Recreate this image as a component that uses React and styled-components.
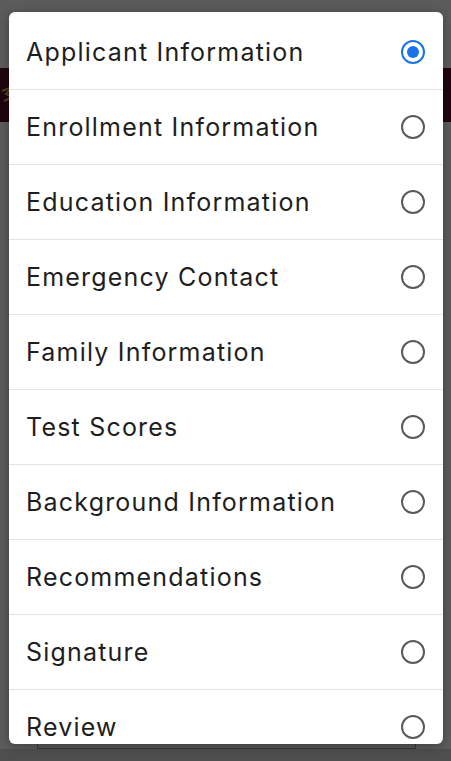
import React, { useState } from "react";
import styled, { createGlobalStyle } from "styled-components";

const GlobalStyle = createGlobalStyle`
  html, body {
    margin: 0;
    padding: 0;
    background: #e4e4e4;
    font-family: Inter, Roboto, "Liberation Sans", sans-serif;
  }
`;

const Screen = styled.div`
  position: relative;
  height: 761px;
  display: flex;
  flex-direction: column;
  overflow: hidden;
`;

const Banner = styled.div`
  margin-top: 68px;
  height: 54px;
  background: #4d0d2a;
  display: flex;
  align-items: center;
  padding-left: 2px;
`;

const Filler = styled.div`
  flex: 1;
`;

const Field = styled.div`
  margin: 0 35px 0 37px;
  height: 40px;
  border: 1px solid #8a8a8a;
  border-top: none;
  background: #d8d8d8;
`;

const Footer = styled.div`
  height: 12px;
  background: #c4c4c4;
`;

const Overlay = styled.div`
  position: absolute;
  inset: 0;
  background: rgba(0, 0, 0, 0.6);
  display: flex;
  padding: 12px 8px 17px 9px;
`;

const Dialog = styled.div`
  flex: 1;
  background: #ffffff;
  border-radius: 6px;
  overflow: hidden;
  box-shadow: 0 2px 10px rgba(0, 0, 0, 0.3);
`;

const List = styled.ul`
  list-style: none;
  margin: 0;
  padding: 3px 0 0;
`;

const Row = styled.li`
  height: 75px;
  box-sizing: border-box;
  border-bottom: 1px solid #e3e3e3;
  display: flex;
  align-items: center;
  justify-content: space-between;
  padding: 0 18px 0 17px;
  cursor: pointer;
`;

const Label = styled.span`
  font-size: 25px;
  color: #1e1e1e;
  letter-spacing: 1.2px;
`;

const Radio = styled.span`
  width: 24px;
  height: 24px;
  box-sizing: border-box;
  border-radius: 50%;
  border: 2px solid ${(p) => (p.$checked ? "#1a73e8" : "#5a5a5a")};
  display: flex;
  align-items: center;
  justify-content: center;

  &::after {
    content: "";
    width: 12px;
    height: 12px;
    border-radius: 50%;
    background: #1a73e8;
    display: ${(p) => (p.$checked ? "block" : "none")};
  }
`;

const sections = [
  "Applicant Information",
  "Enrollment Information",
  "Education Information",
  "Emergency Contact",
  "Family Information",
  "Test Scores",
  "Background Information",
  "Recommendations",
  "Signature",
  "Review",
];

export default function App() {
  const [selected, setSelected] = useState(0);

  return (
    <>
      <GlobalStyle />
      <Screen>
        <Banner>
          <svg width="12" height="20" viewBox="0 0 12 20">
            <path d="M0 6 L10 2 L4 9 L11 12 L2 16" fill="none" stroke="#c9a24a" strokeWidth="2" />
          </svg>
        </Banner>
        <Filler />
        <Field />
        <Footer />

        <Overlay>
          <Dialog>
            <List>
              {sections.map((name, i) => (
                <Row key={name} onClick={() => setSelected(i)}>
                  <Label>{name}</Label>
                  <Radio $checked={selected === i} />
                </Row>
              ))}
            </List>
          </Dialog>
        </Overlay>
      </Screen>
    </>
  );
}
